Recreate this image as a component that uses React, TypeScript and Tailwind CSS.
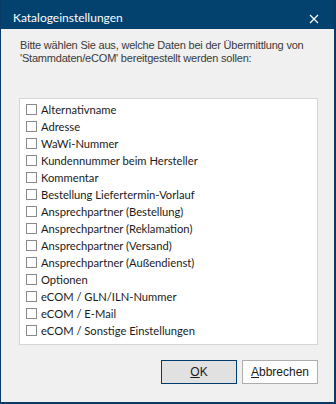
const items = [
  "Alternativname",
  "Adresse",
  "WaWi-Nummer",
  "Kundennummer beim Hersteller",
  "Kommentar",
  "Bestellung Liefertermin-Vorlauf",
  "Ansprechpartner (Bestellung)",
  "Ansprechpartner (Reklamation)",
  "Ansprechpartner (Versand)",
  "Ansprechpartner (Außendienst)",
  "Optionen",
  "eCOM / GLN/ILN-Nummer",
  "eCOM / E-Mail",
  "eCOM / Sonstige Einstellungen",
];

const segoe = "font-['Lato','Noto_Sans',sans-serif]";
const classic = "font-['Liberation_Sans',Arial,sans-serif]";

function CheckRow({ label }: { label: string }) {
  return (
    <label className="flex h-[17px] items-center pl-[6px]">
      <span className="h-[11px] w-[11px] shrink-0 border border-[#8a8a8a] bg-white" />
      <span className={`${segoe} ml-[4px] text-[11.2px] leading-[17px] text-[#1b1b1b]`}>
        {label}
      </span>
    </label>
  );
}

export default function App() {
  return (
    <div className="flex h-[404px] w-[336px] flex-col border-b-2 border-l border-r-2 border-[#0b3a66] bg-[#f0f0f0]">
      {/* title bar */}
      <div className="flex h-[29px] shrink-0 items-start justify-between bg-[#03416f] pl-[12px] pr-[15px] pt-[10px]">
        <span className={`${segoe} text-[12px] leading-[16px] text-white`}>
          Katalogeinstellungen
        </span>
        <svg width="10" height="10" viewBox="0 0 10 10" className="mt-[4px]">
          <path d="M1 1 L9 9 M9 1 L1 9" stroke="white" strokeWidth="1.2" />
        </svg>
      </div>

      <p className={`${classic} mt-[10px] pl-[19px] text-[11px] leading-[13px] tracking-[-0.2px] text-[#3a3a3a]`}>
        Bitte wählen Sie aus, welche Daten bei der Übermittlung von
        <br />
        'Stammdaten/eCOM' bereitgestellt werden sollen:
      </p>

      <div className="ml-[18px] mt-[33px] flex h-[247px] w-[299px] flex-col border border-[#d5d5d5] bg-white pt-[2px]">
        {items.map((item) => (
          <CheckRow key={item} label={item} />
        ))}
      </div>

      <div className="mt-[15px] flex justify-end gap-[5px] pr-[16px]">
        <button className={`${classic} h-[24px] w-[76px] border border-[#003c6e] bg-[#e1e1e1] text-[12px] text-[#1b1b1b]`}>
          <u>O</u>K
        </button>
        <button className={`${classic} h-[24px] w-[76px] border border-[#adadad] bg-[#fdfdfd] text-[12px] text-[#1b1b1b]`}>
          <u>A</u>bbrechen
        </button>
      </div>
    </div>
  );
}
